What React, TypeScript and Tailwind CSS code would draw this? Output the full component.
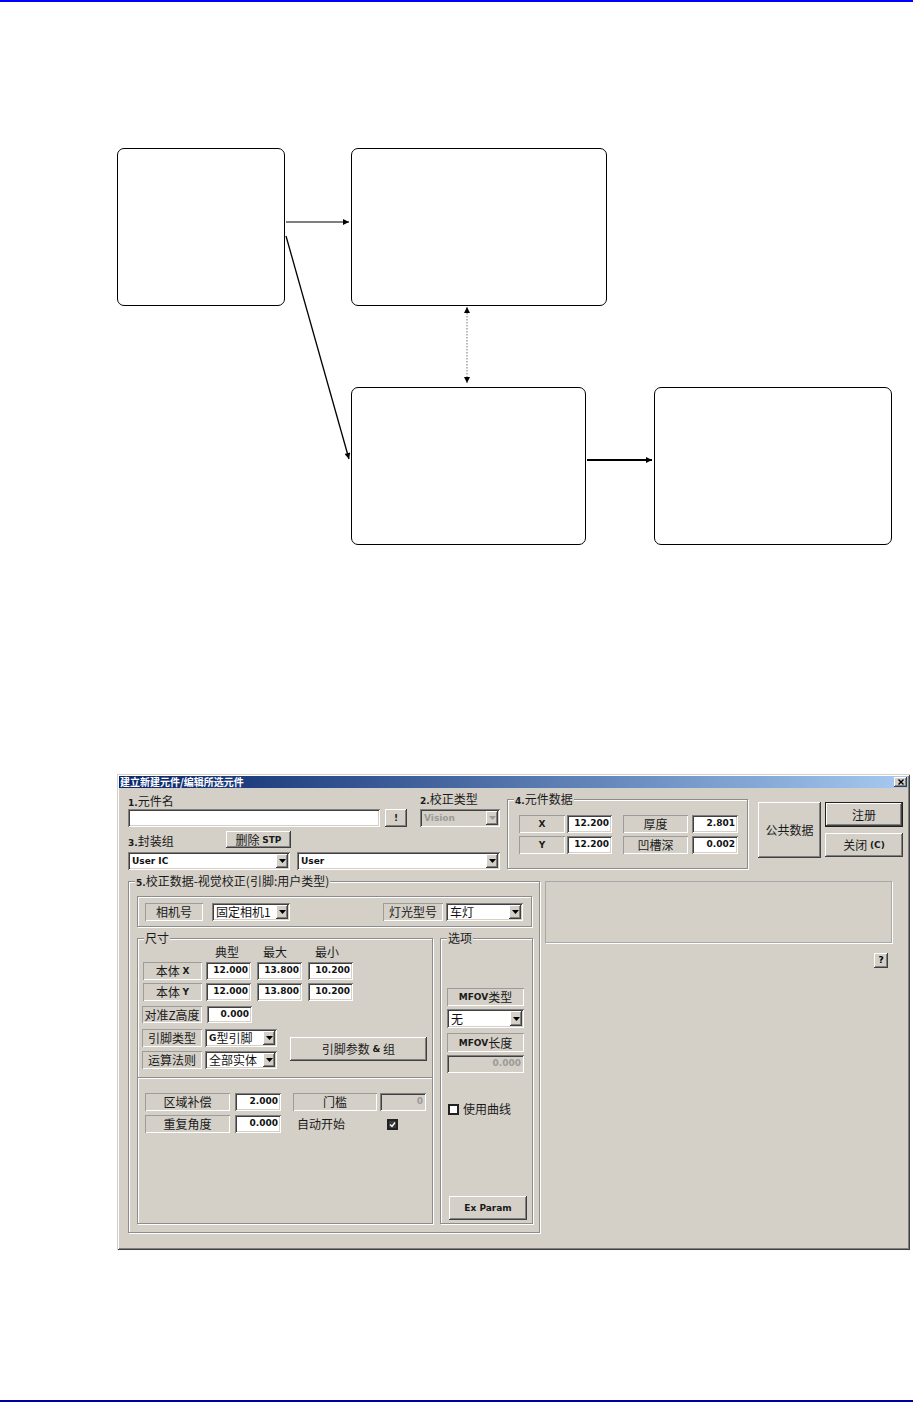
import React from "react";

const CJK = "font-['Noto_Sans_CJK_SC',sans-serif]";
const LAT = "font-['DejaVu_Sans','Noto_Sans_CJK_SC',sans-serif]";
const RAISED =
  "bg-[#d4d0c8] shadow-[inset_-1px_-1px_0_#404040,inset_1px_1px_0_#ffffff,inset_-2px_-2px_0_#808080]";
const DEFBTN =
  "bg-[#d4d0c8] shadow-[inset_0_0_0_1px_#202020,inset_-2px_-2px_0_#404040,inset_2px_2px_0_#ffffff,inset_-3px_-3px_0_#808080]";
const SUNKEN =
  "shadow-[inset_1px_1px_0_#808080,inset_-1px_-1px_0_#ffffff,inset_2px_2px_0_#404040,inset_-2px_-2px_0_#d4d0c8]";
const STATIC = "bg-[#d4d0c8] shadow-[inset_1px_1px_0_#9c9c9c,inset_-1px_-1px_0_#ffffff]";
const ETCH = "border border-[#8c8c8c] shadow-[inset_1px_1px_0_#ffffff,1px_1px_0_#ffffff]";

type P = { className?: string; children?: React.ReactNode };

function B({ children }: { children: React.ReactNode }) {
  return <span className={`${LAT} font-bold text-[9px]`}>{children}</span>;
}

function Group({ label, className = "", children }: P & { label: React.ReactNode }) {
  return (
    <div className={`relative ${ETCH} ${className}`}>
      <span
        className={`absolute -top-[8px] left-[6px] px-[1px] bg-[#d4d0c8] text-[12px] leading-[14px] text-[#1a1a1a] whitespace-nowrap ${CJK}`}
      >
        {label}
      </span>
      {children}
    </div>
  );
}

function Field({ className = "", value, disabled }: P & { value: string; disabled?: boolean }) {
  return (
    <div
      className={`${SUNKEN} ${
        disabled ? "bg-[#d4d0c8] text-[#9a9a9a]" : "bg-white text-[#111]"
      } flex items-center justify-end pr-[3px] text-[9px] font-bold ${LAT} ${className}`}
    >
      {value}
    </div>
  );
}

function Tri({ disabled }: { disabled?: boolean }) {
  return (
    <svg width="7" height="4" viewBox="0 0 7 4">
      <path d="M0 0 H7 L3.5 4 Z" fill={disabled ? "#9a9a9a" : "#000"} />
    </svg>
  );
}

function Combo({ className = "", children, disabled }: P & { disabled?: boolean }) {
  return (
    <div
      className={`${SUNKEN} ${disabled ? "bg-[#d4d0c8]" : "bg-white"} flex items-stretch p-[2px] ${className}`}
    >
      <div
        className={`flex-1 min-w-0 flex items-center pl-[2px] whitespace-nowrap text-[12px] leading-[14px] ${CJK} ${
          disabled ? "text-[#9a9a9a]" : "text-[#111]"
        }`}
      >
        {children}
      </div>
      <div className={`${RAISED} w-[12px] shrink-0 flex items-center justify-center`}>
        <Tri disabled={disabled} />
      </div>
    </div>
  );
}

function Lbl({ className = "", children }: P) {
  return (
    <div
      className={`${STATIC} flex items-center justify-center text-[12px] leading-[14px] text-[#1a1a1a] whitespace-nowrap ${CJK} ${className}`}
    >
      {children}
    </div>
  );
}

function Btn({ className = "", children, def }: P & { def?: boolean }) {
  return (
    <div
      className={`${def ? DEFBTN : RAISED} flex items-center justify-center text-[12px] leading-[14px] text-[#1a1a1a] whitespace-nowrap ${CJK} ${className}`}
    >
      {children}
    </div>
  );
}

function Check({ checked, className = "" }: { checked?: boolean; className?: string }) {
  return (
    <div
      className={`w-[11px] h-[11px] border-2 border-[#222] ${
        checked ? "bg-[#3a3a3a]" : "bg-white"
      } flex items-center justify-center ${className}`}
    >
      {checked && (
        <svg width="7" height="7" viewBox="0 0 7 7">
          <path d="M1 3.5 L3 5.5 L6 1.5" stroke="#fff" strokeWidth="1.4" fill="none" />
        </svg>
      )}
    </div>
  );
}

function Txt({ className = "", children }: P) {
  return (
    <span className={`text-[12px] leading-[14px] text-[#1a1a1a] whitespace-nowrap ${CJK} ${className}`}>
      {children}
    </span>
  );
}

function Diagram() {
  return (
    <div className="relative h-[772px]">
      <div className="absolute left-[117px] top-[146px] w-[168px] h-[158px] border-[1.5px] border-black rounded-[7px] bg-white" />
      <div className="absolute left-[351px] top-[146px] w-[256px] h-[158px] border-[1.5px] border-black rounded-[7px] bg-white" />
      <div className="absolute left-[351px] top-[385px] w-[235px] h-[158px] border-[1.5px] border-black rounded-[7px] bg-white" />
      <div className="absolute left-[654px] top-[385px] w-[238px] h-[158px] border-[1.5px] border-black rounded-[7px] bg-white" />
      <svg className="absolute left-0 top-0" width="913" height="772" viewBox="0 2 913 772">
        <defs>
          <marker
            id="ah"
            viewBox="0 0 10 10"
            refX="10"
            refY="5"
            markerWidth="10"
            markerHeight="6"
            markerUnits="userSpaceOnUse"
            orient="auto-start-reverse"
          >
            <path d="M0 0 L10 5 L0 10 Z" fill="#000" />
          </marker>
        </defs>
        <line x1="286" y1="222" x2="349" y2="222" stroke="#000" strokeWidth="1.2" markerEnd="url(#ah)" />
        <line x1="286" y1="236" x2="349" y2="459" stroke="#000" strokeWidth="1.3" markerEnd="url(#ah)" />
        <line
          x1="467"
          y1="307"
          x2="467"
          y2="383"
          stroke="#8a8a8a"
          strokeWidth="1.2"
          strokeDasharray="1.5 1.5"
          markerStart="url(#ah)"
          markerEnd="url(#ah)"
        />
        <line x1="587" y1="460" x2="652" y2="460" stroke="#000" strokeWidth="2" markerEnd="url(#ah)" />
      </svg>
    </div>
  );
}

function Dialog() {
  return (
    <div className="ml-[117px] w-[793px] h-[476px] bg-[#d4d0c8] shadow-[inset_1px_1px_0_#d4d0c8,inset_-1px_-1px_0_#404040,inset_2px_2px_0_#ffffff,inset_-2px_-2px_0_#808080] flex flex-col">
      {/* title bar */}
      <div className="mx-[2px] mt-[2px] h-[12px] bg-linear-to-r from-[#0a246a] to-[#a6caf0] flex items-center">
        <span className={`pl-[1px] text-white font-bold text-[10px] leading-[12px] ${CJK}`}>
          建立新建元件/编辑所选元件
        </span>
        <div className={`ml-auto mr-[1px] w-[13px] h-[10px] ${RAISED} flex items-center justify-center`}>
          <svg width="6" height="6" viewBox="0 0 6 6">
            <path d="M0.5 0.5 L5.5 5.5 M5.5 0.5 L0.5 5.5" stroke="#000" strokeWidth="1.4" />
          </svg>
        </div>
      </div>

      <div className="pl-[11px] pt-[4px]">
        {/* top section */}
        <div className="flex items-start">
          <div className="w-[372px] flex flex-col">
            <div className="flex h-[15px] items-center">
              <div className="w-[292px]">
                <Txt>
                  <B>1.</B>元件名
                </Txt>
              </div>
              <Txt>
                <B>2.</B>校正类型
              </Txt>
            </div>
            <div className="flex mt-[2px] h-[18px]">
              <Field className="w-[252px]" value="" />
              <Btn className="ml-[5px] w-[22px]">
                <B>!</B>
              </Btn>
              <Combo className="ml-[13px] w-[80px]" disabled>
                <span className={`${LAT} font-bold text-[9px]`}>Vision</span>
              </Combo>
            </div>
            <div className="flex mt-[4px] h-[17px] items-center">
              <div className="w-[98px]">
                <Txt>
                  <B>3.</B>封装组
                </Txt>
              </div>
              <Btn className="w-[65px] h-[17px]">
                删除&nbsp;<B>STP</B>
              </Btn>
            </div>
            <div className="flex mt-[4px] h-[18px]">
              <Combo className="w-[162px]">
                <B>User IC</B>
              </Combo>
              <Combo className="ml-[7px] w-[203px]">
                <B>User</B>
              </Combo>
            </div>
          </div>

          <Group
            className="ml-[7px] mt-[7px] w-[241px] h-[70px]"
            label={
              <>
                <B>4.</B>元件数据
              </>
            }
          >
            <div className="pl-[11px] pt-[15px] flex flex-col gap-[3px]">
              <div className="flex h-[18px]">
                <Lbl className="w-[46px]">
                  <B>X</B>
                </Lbl>
                <Field className="ml-[2px] w-[45px]" value="12.200" />
                <Lbl className="ml-[11px] w-[65px]">厚度</Lbl>
                <Field className="ml-[4px] w-[46px]" value="2.801" />
              </div>
              <div className="flex h-[18px]">
                <Lbl className="w-[46px]">
                  <B>Y</B>
                </Lbl>
                <Field className="ml-[2px] w-[45px]" value="12.200" />
                <Lbl className="ml-[11px] w-[65px]">凹槽深</Lbl>
                <Field className="ml-[4px] w-[46px]" value="0.002" />
              </div>
            </div>
          </Group>

          <Btn className="ml-[10px] mt-[10px] w-[63px] h-[56px]">公共数据</Btn>
          <div className="ml-[4px] mt-[10px] flex flex-col w-[78px]">
            <Btn def className="h-[25px]">
              注册
            </Btn>
            <Btn className="mt-[6px] h-[24px]">
              关闭&nbsp;<B>(C)</B>
            </Btn>
          </div>
        </div>

        {/* group 5 row */}
        <div className="flex items-start mt-[11px]">
          <Group
            className="w-[412px] h-[352px]"
            label={
              <>
                <B>5.</B>校正数据-视觉校正(引脚:用户类型)
              </>
            }
          >
            <div className="pl-[8px] pt-[14px]">
              <div className={`${ETCH} w-[395px] h-[31px] flex items-center`}>
                <Lbl className="ml-[7px] w-[58px] h-[18px]">相机号</Lbl>
                <Combo className="ml-[9px] w-[78px] h-[18px]">固定相机1</Combo>
                <Lbl className="ml-[93px] w-[60px] h-[18px]">灯光型号</Lbl>
                <Combo className="ml-[3px] w-[77px] h-[18px]">车灯</Combo>
              </div>

              <div className="flex mt-[11px]">
                {/* 尺寸 */}
                <Group className="w-[296px] h-[286px]" label="尺寸">
                  <div className="flex flex-col">
                    <div className="flex mt-[7px] h-[12px] items-center">
                      <Txt className="ml-[77px]">典型</Txt>
                      <Txt className="ml-[24px]">最大</Txt>
                      <Txt className="ml-[28px]">最小</Txt>
                    </div>
                    <div className="flex mt-[4px] h-[18px]">
                      <Lbl className="ml-[5px] w-[59px]">
                        本体&nbsp;<B>X</B>
                      </Lbl>
                      <Field className="ml-[4px] w-[45px]" value="12.000" />
                      <Field className="ml-[6px] w-[45px]" value="13.800" />
                      <Field className="ml-[6px] w-[45px]" value="10.200" />
                    </div>
                    <div className="flex mt-[3px] h-[18px]">
                      <Lbl className="ml-[5px] w-[59px]">
                        本体&nbsp;<B>Y</B>
                      </Lbl>
                      <Field className="ml-[4px] w-[45px]" value="12.000" />
                      <Field className="ml-[6px] w-[45px]" value="13.800" />
                      <Field className="ml-[6px] w-[45px]" value="10.200" />
                    </div>
                    <div className="flex mt-[5px] h-[17px]">
                      <Lbl className="ml-[4px] w-[60px]">对准Z高度</Lbl>
                      <Field className="ml-[5px] w-[45px]" value="0.000" />
                    </div>
                    <div className="flex mt-[6px] items-start">
                      <div className="flex flex-col">
                        <div className="flex h-[18px]">
                          <Lbl className="ml-[4px] w-[60px]">引脚类型</Lbl>
                          <Combo className="ml-[3px] w-[72px]">
                            <B>G</B>型引脚
                          </Combo>
                        </div>
                        <div className="flex mt-[4px] h-[18px]">
                          <Lbl className="ml-[4px] w-[60px]">运算法则</Lbl>
                          <Combo className="ml-[3px] w-[72px]">全部实体</Combo>
                        </div>
                      </div>
                      <Btn className="ml-[13px] mt-[8px] w-[137px] h-[24px]">
                        引脚参数&nbsp;<B>&amp;</B>&nbsp;组
                      </Btn>
                    </div>
                    <div className="mt-[8px] h-[2px] border-t border-t-[#8c8c8c] border-b border-b-white" />
                    <div className="flex mt-[14px] h-[18px]">
                      <Lbl className="ml-[7px] w-[85px]">区域补偿</Lbl>
                      <Field className="ml-[5px] w-[46px]" value="2.000" />
                      <Lbl className="ml-[12px] w-[84px]">门槛</Lbl>
                      <Field className="ml-[3px] w-[46px]" value="0" disabled />
                    </div>
                    <div className="flex mt-[4px] h-[18px] items-center">
                      <Lbl className="ml-[7px] w-[85px] h-[18px]">重复角度</Lbl>
                      <Field className="ml-[5px] w-[46px] h-[18px]" value="0.000" />
                      <Txt className="ml-[16px]">自动开始</Txt>
                      <Check checked className="ml-[42px]" />
                    </div>
                  </div>
                </Group>

                {/* 选项 */}
                <Group className="ml-[7px] w-[93px] h-[286px]" label="选项">
                  <div className="flex flex-col h-full pl-[6px]">
                    <Lbl className="mt-[49px] w-[77px] h-[18px]">
                      <B>MFOV</B>类型
                    </Lbl>
                    <Combo className="mt-[3px] w-[77px] h-[19px]">无</Combo>
                    <Lbl className="mt-[5px] w-[77px] h-[19px]">
                      <B>MFOV</B>长度
                    </Lbl>
                    <Field className="mt-[3px] w-[77px] h-[18px]" value="0.000" disabled />
                    <div className="flex items-center mt-[29px]">
                      <Check className="ml-[1px]" />
                      <Txt className="ml-[4px]">使用曲线</Txt>
                    </div>
                    <Btn className="mt-auto mb-[3px] ml-[2px] w-[78px] h-[24px]">
                      <B>Ex Param</B>
                    </Btn>
                  </div>
                </Group>
              </div>
            </div>
          </Group>

          <div className="ml-[5px] flex flex-col w-[347px]">
            <div className="h-[62px] border border-[#a8a8a8] shadow-[1px_1px_0_#ffffff]" />
            <div className={`self-end mr-[4px] mt-[10px] w-[14px] h-[15px] ${RAISED} flex items-center justify-center`}>
              <B>?</B>
            </div>
          </div>
        </div>
      </div>
    </div>
  );
}

export default function App() {
  return (
    <div className="w-[913px] h-[1402px] bg-white flex flex-col overflow-hidden">
      <div className="h-[2px] bg-[#0000ff]" />
      <Diagram />
      <Dialog />
      <div className="flex-1" />
      <div className="h-[2px] bg-[#0000a0]" />
    </div>
  );
}
